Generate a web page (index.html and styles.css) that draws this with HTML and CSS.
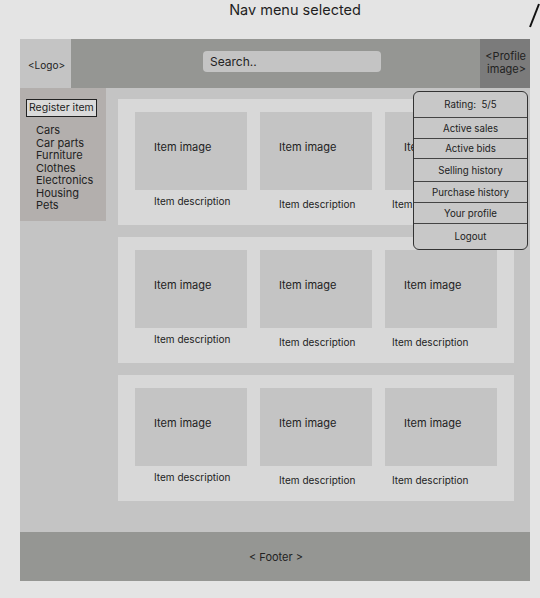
FILE: index.html
```html
<!DOCTYPE html>
<html lang="en">
  <head>
    <meta charset="UTF-8" />
    <meta name="viewport" content="width=device-width, initial-scale=1.0" />
    <title>Nav menu selected</title>
    <link rel="stylesheet" href="styles.css">
  </head>
  <body>
    <div class="title">Nav menu selected</div>
    <svg class="stroke" width="14" height="30" viewBox="0 0 14 30">
      <line x1="3" y1="27" x2="12" y2="4"></line>
    </svg>

    <div class="frame">
      <div class="header">
        <div class="logo">&lt;Logo&gt;</div>
        <div class="search-wrap">
          <div class="search">Search..</div>
        </div>
        <div class="profile">&lt;Profile<br>image&gt;</div>
      </div>

      <div class="middle">
        <div class="sidebar">
          <div class="register">Register item</div>
          <ul class="cats">
            <li>Cars</li>
            <li>Car parts</li>
            <li>Furniture</li>
            <li>Clothes</li>
            <li>Electronics</li>
            <li>Housing</li>
            <li>Pets</li>
          </ul>
        </div>

        <div class="main">
          <div class="card">
            <div class="item">
              <div class="img">Item image</div>
              <div class="desc first">Item description</div>
            </div>
            <div class="item">
              <div class="img">Item image</div>
              <div class="desc">Item description</div>
            </div>
            <div class="item">
              <div class="img">Item image</div>
              <div class="desc last">Item description</div>
            </div>
          </div>
          <div class="card">
            <div class="item">
              <div class="img">Item image</div>
              <div class="desc first">Item description</div>
            </div>
            <div class="item">
              <div class="img">Item image</div>
              <div class="desc">Item description</div>
            </div>
            <div class="item">
              <div class="img">Item image</div>
              <div class="desc last">Item description</div>
            </div>
          </div>
          <div class="card">
            <div class="item">
              <div class="img">Item image</div>
              <div class="desc first">Item description</div>
            </div>
            <div class="item">
              <div class="img">Item image</div>
              <div class="desc">Item description</div>
            </div>
            <div class="item">
              <div class="img">Item image</div>
              <div class="desc last">Item description</div>
            </div>
          </div>
        </div>
      </div>

      <div class="footer">&lt; Footer &gt;</div>

      <!-- opened nav menu -->
      <ul class="menu">
        <li class="r1">Rating:&nbsp; 5/5</li>
        <li class="r2">Active sales</li>
        <li class="r3">Active bids</li>
        <li class="r4">Selling history</li>
        <li class="r5">Purchase history</li>
        <li class="r6">Your profile</li>
        <li class="r7">Logout</li>
      </ul>
    </div>
  </body>
</html>
```

FILE: styles.css
```css
* {
  margin: 0;
  padding: 0;
  box-sizing: border-box;
}
body {
  background: #e4e4e4;
  font-family: Inter, "Noto Sans", sans-serif;
  color: #222;
  position: relative;
  width: 540px;
  height: 598px;
  overflow: hidden;
}
.title {
  height: 39px;
  padding: 1px 0 0 50px;
  text-align: center;
  font-size: 14.5px;
  line-height: 17px;
  color: #1e1e1e;
}
.stroke {
  position: absolute;
  left: 527px;
  top: 0;
}
.stroke line {
  stroke: #111;
  stroke-width: 2;
}
.frame {
  position: relative;
  margin-left: 20px;
  width: 510px;
  height: 542px;
  display: flex;
  flex-direction: column;
  background: #c4c4c4;
}
.header {
  height: 49px;
  display: flex;
  background: #959693;
}
.logo {
  width: 51px;
  background: #c4c4c4;
  font-size: 10px;
  display: flex;
  align-items: center;
  padding: 2px 0 0 8px;
}
.search-wrap {
  flex: 1;
  padding: 12px 0 0 132px;
}
.search {
  width: 178px;
  height: 21px;
  border-radius: 4px;
  background: #c4c4c4;
  font-size: 12px;
  line-height: 21px;
  padding-left: 7px;
}
.profile {
  width: 50px;
  background: #7b7b7b;
  font-size: 11px;
  line-height: 13px;
  text-align: right;
  padding: 11px 4px 0 0;
}
.middle {
  flex: 1;
  display: flex;
  align-items: flex-start;
}
.sidebar {
  width: 86px;
  height: 133px;
  background: #b3afad;
  padding: 11px 0 0 6px;
}
.register {
  width: 71px;
  height: 18px;
  border: 1px solid #222;
  background: #dadada;
  font-size: 10.5px;
  line-height: 16px;
  padding-left: 2px;
  white-space: nowrap;
  overflow: hidden;
}
.cats {
  list-style: none;
  margin-top: 7px;
  padding-left: 10px;
  font-size: 11px;
  line-height: 12.5px;
}
.main {
  flex: 1;
  display: flex;
  flex-direction: column;
  gap: 12px;
  padding: 11px 16px 0 12px;
}
.card {
  height: 126px;
  background: #d8d8d8;
  display: grid;
  grid-template-columns: repeat(3, 112px);
  gap: 13px;
  padding: 13px 17px 0;
}
.img {
  height: 78px;
  background: #c4c4c4;
  font-size: 11px;
  line-height: 13px;
  padding: 29px 0 0 19px;
}
.desc {
  font-size: 10px;
  line-height: 12px;
  margin-top: 8px;
  padding-left: 19px;
}
.desc.first {
  margin-top: 5px;
}
.desc.last {
  padding-left: 7px;
}
.footer {
  height: 49px;
  background: #959693;
  display: flex;
  justify-content: center;
  align-items: center;
  font-size: 11px;
  padding-left: 2px;
}
.menu {
  position: absolute;
  left: 393px;
  top: 52px;
  width: 115px;
  list-style: none;
  background: #c8c8c8;
  border: 1px solid #333;
  border-radius: 6px;
  overflow: hidden;
  font-size: 9.7px;
  text-align: center;
}
.menu li {
  display: flex;
  align-items: center;
  justify-content: center;
  border-top: 1px solid #444;
}
.menu .r1 { height: 25px; border-top: none; }
.menu .r2 { height: 21px; }
.menu .r3 { height: 20px; }
.menu .r4 { height: 23px; }
.menu .r5 { height: 21px; }
.menu .r6 { height: 21px; }
.menu .r7 { height: 26px; }
```
